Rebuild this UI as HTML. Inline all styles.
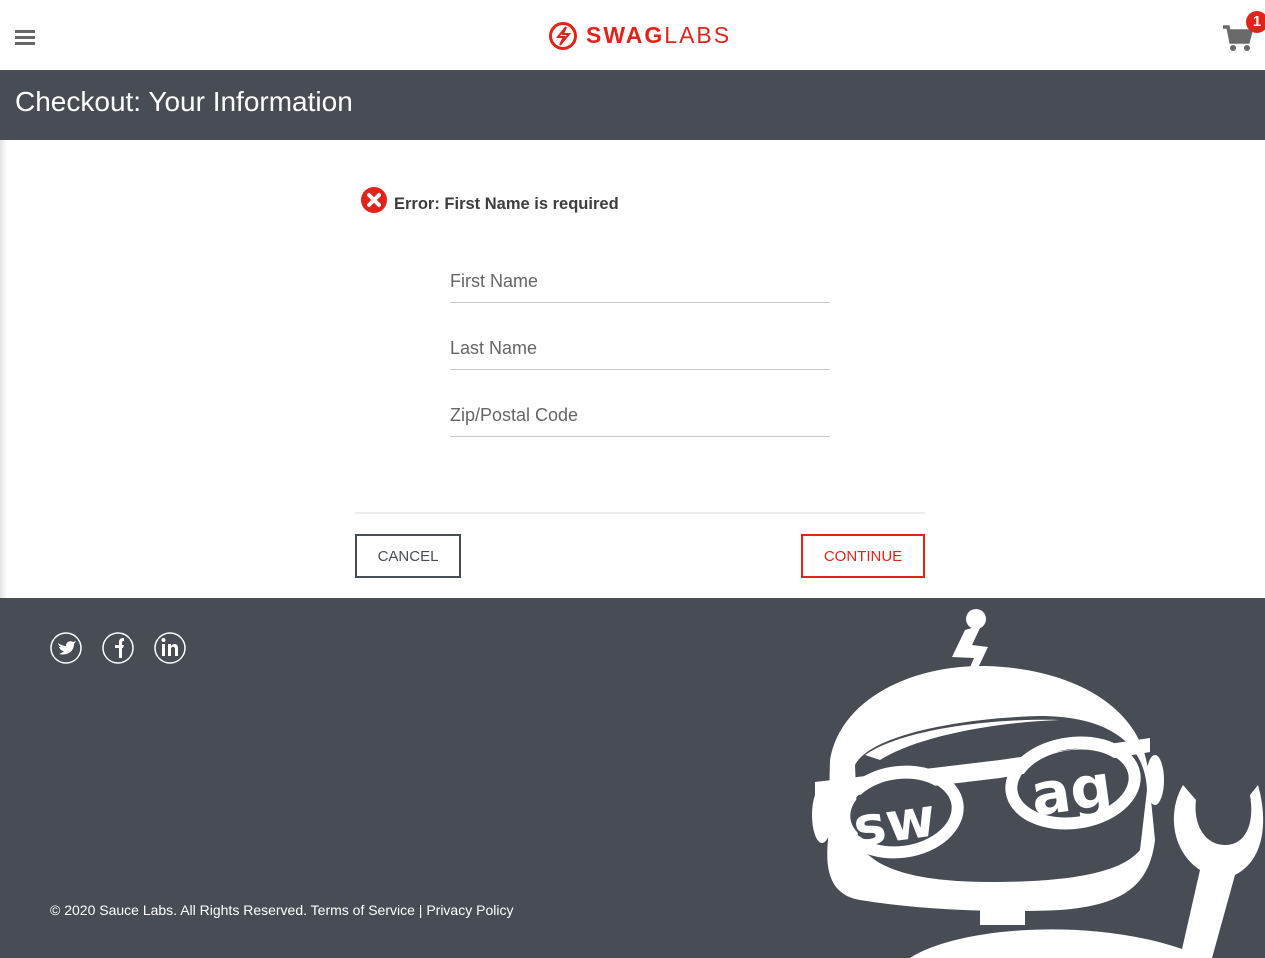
<!DOCTYPE html>
<html><head><meta charset="utf-8"><style>
*{margin:0;padding:0;box-sizing:border-box}
body{width:1265px;height:958px;overflow:hidden;background:#fff;font-family:"Liberation Sans",Arial,sans-serif;position:relative}
.abs{position:absolute}
.hdr{left:0;top:0;width:1265px;height:70px;background:#fff}
.bar{left:0;top:70px;width:1265px;height:70px;background:#474c55;color:#fff;font-size:28px;padding:16px 0 0 15px}
.shadow{left:0;top:140px;width:7px;height:580px;background:linear-gradient(to right,#e2e2e2,#fff)}
.err{left:394px;top:195px;font-size:16.5px;font-weight:bold;color:#3d3d3d}
.inp{left:450px;width:380px;height:34px;border-bottom:1px solid #c8c8c8;font-size:18px;color:#666;padding-top:2px}
.btn{top:534px;height:44px;border:2px solid;font-size:15px;text-align:center;line-height:41px;background:#fff}
.foot{left:0;top:598px;width:1265px;height:360px;background:#474c55}
.copy{left:50px;top:902px;color:#fff;font-size:14px}
</style></head><body>
<div class="abs hdr"></div>
<div class="abs" style="left:15px;top:30px;width:20px;height:3px;background:#666"></div>
<div class="abs" style="left:15px;top:36px;width:20px;height:3px;background:#666"></div>
<div class="abs" style="left:15px;top:42px;width:20px;height:3px;background:#666"></div>
<svg class="abs" style="left:549px;top:22px" width="28" height="28" viewBox="0 0 28 28"><circle cx="14" cy="14" r="12.5" fill="none" stroke="#e2231a" stroke-width="3"/><path d="M17 5 L9 15 H15 L11 23 L20 12 H14 Z" fill="none" stroke="#e2231a" stroke-width="2"/></svg>
<div class="abs" style="left:586px;top:22px;font-size:23px;letter-spacing:2px;color:#e2231a"><b>SWAG</b>LABS</div>
<svg class="abs" style="left:1222px;top:24px" width="32" height="28" viewBox="0 0 32 28"><path d="M1 3 H6 L9 18 H26 L29 7 H8" fill="none" stroke="#6a6a6a" stroke-width="3.5"/><rect x="8" y="8" width="20" height="9" fill="#6a6a6a"/><circle cx="11" cy="24" r="3" fill="#6a6a6a"/><circle cx="25" cy="24" r="3" fill="#6a6a6a"/></svg>
<div class="abs" style="left:1246px;top:11px;width:22px;height:22px;border-radius:50%;background:#e2231a;color:#fff;font-size:15px;font-weight:bold;text-align:center;line-height:22px">1</div>
<div class="abs bar">Checkout: Your Information</div>
<div class="abs shadow"></div>
<svg class="abs" style="left:361px;top:187px" width="26" height="26" viewBox="0 0 26 26"><circle cx="13" cy="13" r="13" fill="#e2231a"/><path d="M8 8 L18 18 M18 8 L8 18" stroke="#fff" stroke-width="4" stroke-linecap="round"/></svg>
<div class="abs err">Error: First Name is required</div>
<div class="abs inp" style="top:269px">First Name</div>
<div class="abs inp" style="top:336px">Last Name</div>
<div class="abs inp" style="top:403px">Zip/Postal Code</div>
<div class="abs" style="left:355px;top:512px;width:570px;height:2px;background:#ededed"></div>
<div class="abs btn" style="left:355px;width:106px;border-color:#474c55;color:#474c55">CANCEL</div>
<div class="abs btn" style="left:801px;width:124px;border-color:#e2231a;color:#e2231a">CONTINUE</div>
<div class="abs foot"></div>
<svg class="abs" style="left:48px;top:630px" width="140" height="36" viewBox="0 0 140 36">
<g fill="none" stroke="#fff" stroke-width="1.5"><circle cx="18" cy="18" r="15"/><circle cx="70" cy="18" r="15"/><circle cx="122" cy="18" r="15"/></g>
<path d="M10 13 C13 15 16 16 18 16 C18 12 22 10 25 12 L28 11 L26 14 C26 21 20 26 11 24 C14 23 15 22 16 21 C13 21 12 19 11 17 C12 17 13 17 13 17 C11 16 10 14 10 13Z" fill="#fff"/>
<path d="M71 28 V18 H67 V15 H71 V12 C71 9 73 8 76 8 V11 C74 11 74 12 74 13 V15 H76 L75 18 H74 V28Z" fill="#fff"/>
<rect x="114" y="14" width="3" height="12" fill="#fff"/><circle cx="115.5" cy="10" r="2" fill="#fff"/><path d="M120 26 V14 H123 V16 C125 13 130 13 130 18 V26 H127 V19 C127 16 123 16 123 19 V26Z" fill="#fff"/>
</svg>
<div class="abs copy">© 2020 Sauce Labs. All Rights Reserved. Terms of Service | Privacy Policy</div>
<svg class="abs" style="left:800px;top:598px" width="465" height="360" viewBox="800 598 465 360">
<g fill="#fff">
<circle cx="976" cy="619" r="10"/>
<path d="M972 628 L980 628 L972 645 L988 647 L976 672 L968 672 L974 658 L952 657 L965 630Z"/>
<path d="M830 760 C840 700 910 665 985 666 C1070 668 1140 705 1148 770 L1155 840 C1150 880 1130 905 1060 910 C1000 913 920 910 860 900 C830 895 825 870 828 840Z"/>
<path d="M980 905 H1025 V925 H980Z"/>
<path d="M910 958 C960 925 1110 915 1205 958Z"/>
<path d="M1183 785 C1168 810 1170 850 1200 870 L1180 958 H1212 L1235 875 C1265 860 1268 820 1258 785 L1250 795 C1255 825 1245 845 1225 845 C1205 845 1193 825 1196 800Z"/>
<ellipse cx="822" cy="815" rx="10" ry="28"/><ellipse cx="1155" cy="780" rx="9" ry="25"/>
</g>
<path d="M855 765 C870 735 960 718 1040 716 C1110 716 1145 745 1147 790 L1140 850 C1120 875 1060 882 990 882 C920 882 870 870 858 840Z" fill="#474c55"/>
<path d="M865 755 C900 730 990 718 1060 720 C1000 722 920 735 880 760Z" fill="#fff"/>
<g fill="#fff"><path d="M815 782 L1000 760 L1150 738 L1150 752 L1000 778 L815 800Z"/></g>
<g fill="none" stroke="#fff" stroke-width="12">
<ellipse cx="900" cy="812" rx="58" ry="40" transform="rotate(-8 900 812)"/>
<ellipse cx="1073" cy="783" rx="62" ry="40" transform="rotate(-8 1073 783)"/>
</g>
<g fill="#474c55"><ellipse cx="900" cy="812" rx="50" ry="33" transform="rotate(-8 900 812)"/><ellipse cx="1073" cy="783" rx="54" ry="33" transform="rotate(-8 1073 783)"/></g>
<text x="852" y="840" font-family="DejaVu Sans,sans-serif" font-weight="bold" font-size="54" fill="#fff" transform="rotate(-8 900 812)">sw</text>
<text x="1030" y="810" font-family="DejaVu Sans,sans-serif" font-weight="bold" font-size="58" fill="#fff" transform="rotate(-8 1073 783)">ag</text>
</svg>
</body></html>
